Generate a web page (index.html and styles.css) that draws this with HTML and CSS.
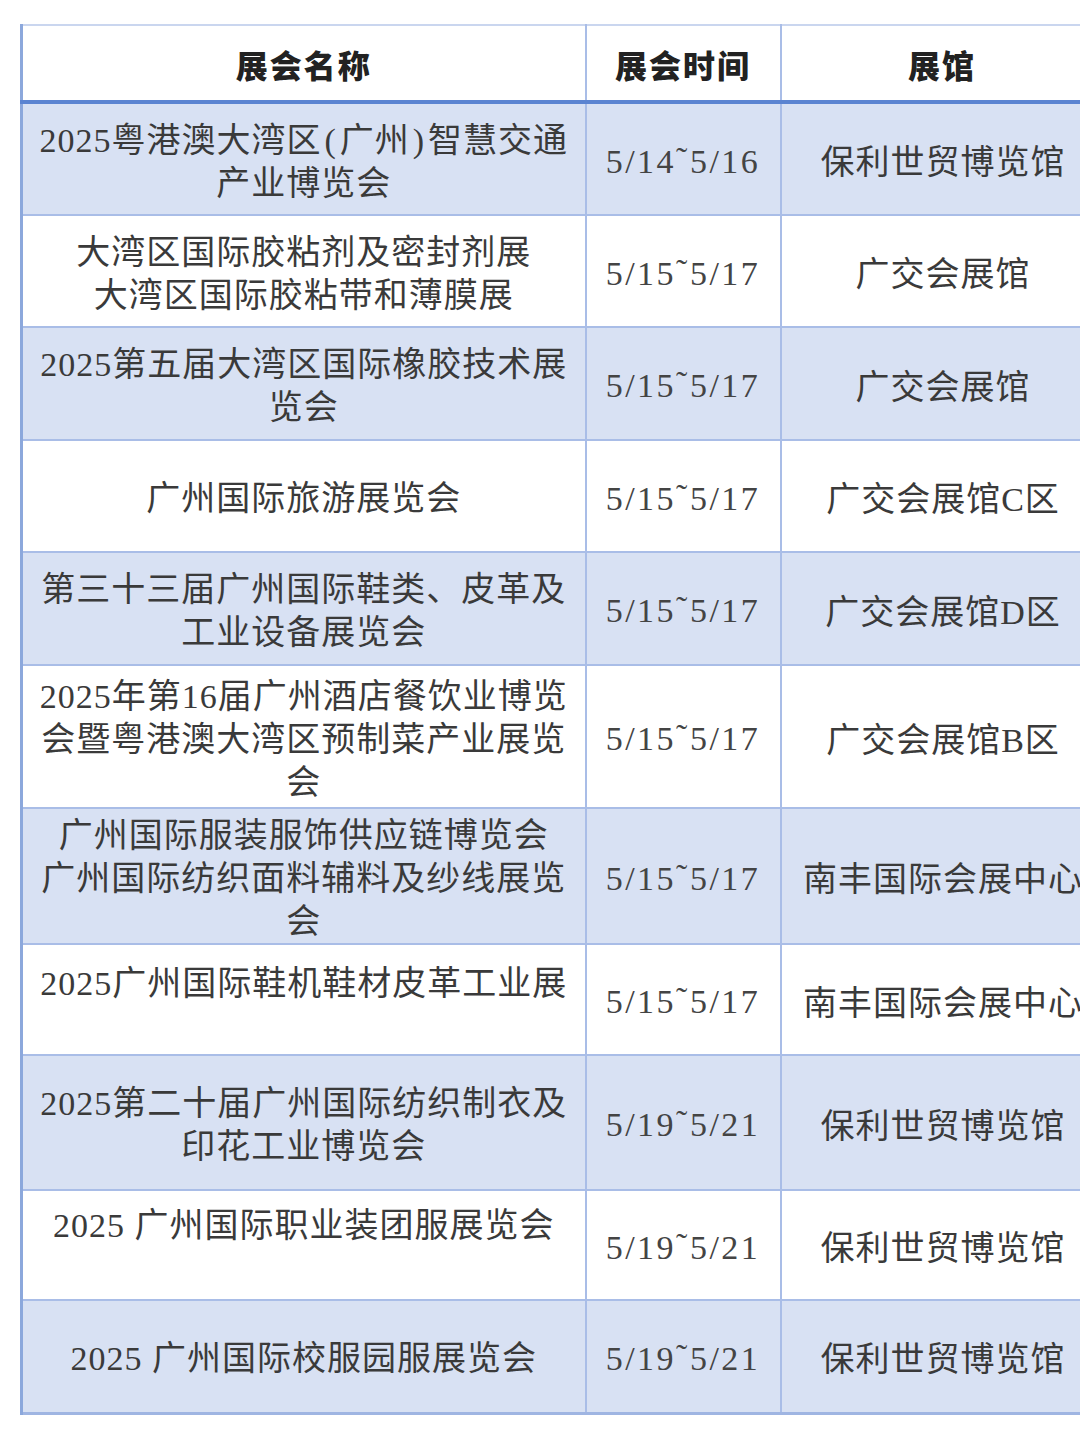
FILE: index.html
```html
<!DOCTYPE html>
<html lang="zh-CN">
<head>
<meta charset="utf-8">
<title>展会列表</title>
<link rel="stylesheet" href="styles.css">
</head>
<body>
<div class="page">
<table class="expo">
  <colgroup>
    <col class="c-name">
    <col class="c-date">
    <col class="c-hall">
  </colgroup>
  <thead>
    <tr class="h-row">
      <th>展会名称</th>
      <th>展会时间</th>
      <th>展馆</th>
    </tr>
  </thead>
  <tbody>
    <tr class="blue r113">
      <td class="name">2025粤港澳大湾区<span class="p">(</span>广州<span class="p">)</span>智慧交通<br>产业博览会</td>
      <td class="date">5/14<span class="t">˜</span>5/16</td>
      <td class="hall">保利世贸博览馆</td>
    </tr>
    <tr class="white r112">
      <td class="name">大湾区国际胶粘剂及密封剂展<br>大湾区国际胶粘带和薄膜展</td>
      <td class="date">5/15<span class="t">˜</span>5/17</td>
      <td class="hall">广交会展馆</td>
    </tr>
    <tr class="blue r113">
      <td class="name">2025第五届大湾区国际橡胶技术展<br>览会</td>
      <td class="date">5/15<span class="t">˜</span>5/17</td>
      <td class="hall">广交会展馆</td>
    </tr>
    <tr class="white r112">
      <td class="name">广州国际旅游展览会</td>
      <td class="date">5/15<span class="t">˜</span>5/17</td>
      <td class="hall">广交会展馆C区</td>
    </tr>
    <tr class="blue r113">
      <td class="name">第三十三届广州国际鞋类、皮革及<br>工业设备展览会</td>
      <td class="date">5/15<span class="t">˜</span>5/17</td>
      <td class="hall">广交会展馆D区</td>
    </tr>
    <tr class="white r143">
      <td class="name">2025年第16届广州酒店餐饮业博览<br>会暨粤港澳大湾区预制菜产业展览<br>会</td>
      <td class="date">5/15<span class="t">˜</span>5/17</td>
      <td class="hall">广交会展馆B区</td>
    </tr>
    <tr class="blue r136">
      <td class="name">广州国际服装服饰供应链博览会<br>广州国际纺织面料辅料及纱线展览<br>会</td>
      <td class="date">5/15<span class="t">˜</span>5/17</td>
      <td class="hall">南丰国际会展中心</td>
    </tr>
    <tr class="white r111">
      <td class="name top top17">2025广州国际鞋机鞋材皮革工业展</td>
      <td class="date">5/15<span class="t">˜</span>5/17</td>
      <td class="hall">南丰国际会展中心</td>
    </tr>
    <tr class="blue r135">
      <td class="name">2025第二十届广州国际纺织制衣及<br>印花工业博览会</td>
      <td class="date">5/19<span class="t">˜</span>5/21</td>
      <td class="hall">保利世贸博览馆</td>
    </tr>
    <tr class="white r110">
      <td class="name top top13">2025 广州国际职业装团服展览会</td>
      <td class="date">5/19<span class="t">˜</span>5/21</td>
      <td class="hall">保利世贸博览馆</td>
    </tr>
    <tr class="blue r113 last">
      <td class="name">2025 广州国际校服园服展览会</td>
      <td class="date">5/19<span class="t">˜</span>5/21</td>
      <td class="hall">保利世贸博览馆</td>
    </tr>
  </tbody>
</table>
</div>
</body>
</html>
```

FILE: styles.css
```css
html, body {
  margin: 0;
  padding: 0;
  background: #ffffff;
}

body {
  width: 1080px;
  height: 1440px;
  overflow: hidden;
}

.page {
  padding: 24px 0 0 20px;
  width: 1100px;
}

.expo {
  border-collapse: collapse;
  table-layout: fixed;
  width: 1082px;
  font-family: "Liberation Serif", "Noto Sans CJK SC", serif;
  font-size: 34px;
  letter-spacing: 1px;
  line-height: 43px;
  color: #3d3d3d;
  border-left: 3px solid #8ca8dc;
  border-top: 2px solid #cad6ef;
  border-bottom: 3px solid #9fb5e2;
}

.c-name { width: 564px; }
.c-date { width: 195px; }
.c-hall { width: 323px; }

.expo th,
.expo td {
  border-left: 2px solid #a9bde7;
  border-right: 2px solid #a9bde7;
  border-bottom: 2px solid #a9bde7;
  text-align: center;
  vertical-align: middle;
  padding: 0;
  white-space: nowrap;
  overflow: hidden;
}

.expo th:first-child,
.expo td:first-child {
  border-left: 3px solid #8ca8dc;
}

.h-row {
  height: 77px;
  background: #ffffff;
}

.expo th {
  font-family: "Noto Sans CJK SC", sans-serif;
  font-weight: 900;
  font-size: 32px;
  letter-spacing: 2px;
  color: #222222;
  border-bottom: 4px solid #5b84d1;
  padding-top: 2px;
}

.blue { background: #d8e1f3; }
.white { background: #ffffff; }

.r110 { height: 110px; }
.r111 { height: 111px; }
.r112 { height: 112px; }
.r113 { height: 113px; }
.r135 { height: 135px; }
.r136 { height: 136px; }
.r143 { height: 143px; }

.name {
  color: #3a3a3a;
  padding-top: 5px !important;
}

.name .p {
  margin: 0 3px;
}

.top { vertical-align: top !important; }
.top17 { padding-top: 17px !important; }
.top13 { padding-top: 13px !important; }

.date {
  letter-spacing: 2.5px;
  color: #444444;
  padding-top: 4px !important;
}

.date .t {
  position: relative;
  top: -2px;
}

.hall {
  color: #3a3a3a;
  padding-left: 2px !important;
  padding-top: 7px !important;
}
```
